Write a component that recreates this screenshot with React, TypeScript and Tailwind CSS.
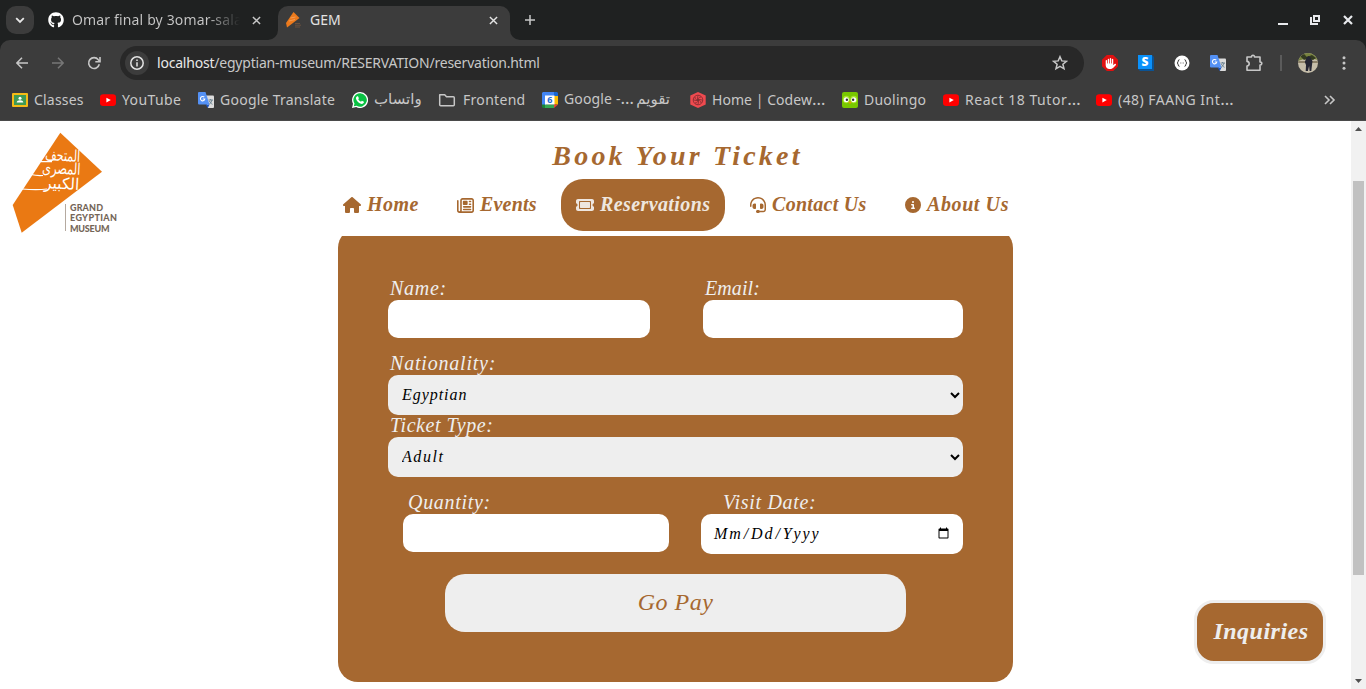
import React from 'react';
import { FaGithub, FaHouse, FaRegNewspaper, FaTicket, FaHeadset, FaCircleInfo, FaHand } from 'react-icons/fa6';

function Close({ className }: { className: string }) {
  return (
    <svg viewBox="0 0 10 10" className={className} fill="none" stroke="currentColor">
      <path d="M1 1l8 8M9 1L1 9" />
    </svg>
  );
}

function YouTubeIcon() {
  return (
    <svg viewBox="0 0 16 16" className="size-4 shrink-0">
      <rect y="2.3" width="16" height="11.6" rx="3.2" fill="#f00" />
      <path d="M6.4 5.7v4.8l4.4-2.4z" fill="#fff" />
    </svg>
  );
}

function TranslateIcon() {
  return (
    <svg viewBox="0 0 16 16" className="size-4 shrink-0">
      <path d="M6 3.5h9a1 1 0 0 1 1 1V15a1 1 0 0 1-1 1H10z" fill="#dcdcdc" />
      <path d="M10.500 8h4.500M12.600 7v1M14 8c-.5 2-1.500 3.500-3 4.500M11.500 9c.5 1.500 1.500 2.500 3 3.300" stroke="#607988" strokeWidth=".9" fill="none" />
      <path d="M7.500 12.600h4L9.800 16z" fill="#1a53c0" />
      <path d="M1 0h6.500l4 12.600H1a1 1 0 0 1-1-1V1a1 1 0 0 1 1-1z" fill="#5491f5" />
      <path d="M6.300 5.200A2.200 2.200 0 1 0 6.800 7H4.700" stroke="#fff" strokeWidth="1.100" fill="none" />
    </svg>
  );
}

function ClassesIcon() {
  return (
    <svg viewBox="0 0 16 16" className="size-4 shrink-0">
      <rect y="1" width="16" height="14" rx="1" fill="#f5bb16" />
      <rect x="2" y="3" width="12" height="10" fill="#3f9a55" />
      <circle cx="8" cy="6.2" r="1.5" fill="#fff" />
      <path d="M4.7 10.500c0-3 6.600-3 6.600 0z" fill="#fff" />
    </svg>
  );
}

function WhatsIcon() {
  return (
    <svg viewBox="0 0 16 16" className="size-4 shrink-0">
      <path d="M8 0a8 8 0 1 1-3.800 15L0 16l1-4.200A8 8 0 0 1 8 0z" fill="#fff" />
      <path d="M8 1.300a6.700 6.700 0 1 1-3.400 12.400l-2.800.6.700-2.700A6.700 6.700 0 0 1 8 1.300z" fill="#0ac143" />
      <path d="M5.200 4.300l.8-.1.900 2-.7 1q1 1.800 2.800 2.600l.9-1 2 1c.2 1.800-1.800 2.400-3 2C6.500 11 4.500 9 4 6.800c-.2-1 .4-2.100 1.200-2.500z" fill="#fff" />
    </svg>
  );
}

function FolderIcon() {
  return (
    <svg viewBox="0 0 18 16" className="h-4 w-[18px] shrink-0" fill="none" stroke="#c7c7c7" strokeWidth="1.500">
      <path d="M1.700 2.700h5l1.800 2h6.800q1 0 1 1v7q0 1-1 1H2.700q-1 0-1-1z" strokeLinejoin="round" />
    </svg>
  );
}

function CalendarIcon() {
  return (
    <svg viewBox="0 0 16 16" className="size-4 shrink-0">
      <path d="M1 0h11v4H4v9H0V1z" fill="#4285f4" />
      <path d="M12 0h3l1 1v3h-4z" fill="#1967d2" />
      <path d="M12 4h4v8.500h-4z" fill="#fbbc04" />
      <path d="M3 12.500h9V16H3z" fill="#34a853" />
      <path d="M0 12.500h3V16H1L0 15z" fill="#188038" />
      <path d="M12 12.500h4L12 16z" fill="#ea4335" />
      <path d="M3 3.500h9.500v9H3z" fill="#fff" />
      <text x="7.800" y="11.200" textAnchor="middle" className="fill-[#1967d2] font-['Noto_Sans',sans-serif] text-[9px] font-bold">6</text>
    </svg>
  );
}

function CodewarsIcon() {
  return (
    <svg viewBox="0 0 16 16" className="size-4 shrink-0">
      <path d="M8 0l7.700 3.500v9L8 16 .3 12.500v-9z" fill="#ef4a4f" />
      <g fill="none" stroke="#7b2a2f" strokeWidth=".8">
        <circle cx="8" cy="8" r="4.800" />
        <path d="M8 8c0-2 1-3 3-3M8 8c2 0 3 1 3 3M8 8c0 2-1 3-3 3M8 8c-2 0-3-1-3-3M8 8c1.500-1 3-.7 4.500.5M8 8c-1.500 1-3 .7-4.500-.5M8 8c-1-1.500-.7-3 .3-4.500M8 8c1 1.500.7 3-.3 4.500" />
      </g>
    </svg>
  );
}

function DuoIcon() {
  return (
    <svg viewBox="0 0 16 16" className="size-4 shrink-0">
      <rect width="16" height="16" rx="2" fill="#78c800" />
      <ellipse cx="4.300" cy="7.500" rx="3.500" ry="3.800" fill="#a8e52d" />
      <ellipse cx="11.700" cy="7.500" rx="3.500" ry="3.800" fill="#a8e52d" />
      <circle cx="4.300" cy="7.700" r="2.500" fill="#fff" />
      <circle cx="11.700" cy="7.700" r="2.500" fill="#fff" />
      <circle cx="4.900" cy="7.700" r="1.200" fill="#333" />
      <circle cx="11.100" cy="7.700" r="1.200" fill="#333" />
      <path d="M6.300 9.700h3.400L8 12z" fill="#f49000" />
    </svg>
  );
}

function Bookmark({ icon, width, children }: { icon: React.ReactNode; width: string; children: React.ReactNode }) {
  return (
    <div className={`flex shrink-0 items-center gap-1.5 whitespace-nowrap ${width}`}>
      {icon}
      <div className="flex gap-1.5 pb-0.5">{children}</div>
    </div>
  );
}

function TabStrip() {
  return (
    <div className="flex h-10 bg-[#1f2121] text-[#c7c7c7]">
      <div className="mt-1.5 ml-1.5 flex size-7 items-center justify-center rounded-[10px] bg-[#3c3c3c]">
        <svg viewBox="0 0 10 10" className="size-2.5" fill="none" stroke="#e8e8e8" strokeWidth="1.800">
          <path d="M1.200 3.200L5 7l3.800-3.800" />
        </svg>
      </div>
      <div className="flex w-[244px] items-center pl-3.5">
        <FaGithub className="size-4 shrink-0 text-white" />
        <span className="ml-2 w-[168px] bg-linear-to-r from-[#c7c7c7] from-80% to-transparent bg-clip-text pb-0.5 text-[14px] tracking-[0.150px] whitespace-nowrap text-transparent">Omar final by 3omar-sala</span>
        <Close className="ml-3 size-[9px] shrink-0 stroke-[1.600]" />
      </div>
      <div className="relative mt-1.5 flex h-[34px] w-[232px] items-center rounded-t-[10px] bg-[#3c3c3c] pb-1.5 text-[#e3e3e3]">
        <svg viewBox="0 0 10 10" className="absolute bottom-0 -left-2.5 size-2.5"><path d="M10 0v10H0A10 10 0 0 0 10 0z" fill="#3c3c3c" /></svg>
        <svg viewBox="0 0 10 10" className="absolute -right-2.5 bottom-0 size-2.5"><path d="M0 0v10h10A10 10 0 0 1 0 0z" fill="#3c3c3c" /></svg>
        <svg viewBox="0 0 16 16" className="ml-2 size-4">
          <path d="M7.500 0l6 6L1 15.500 0 11z" fill="#ec7a1c" />
          <path d="M4.500 6l5-1M3 9l6-1.500" stroke="#f6b27a" strokeWidth=".6" />
          <path d="M9 11.500h5M9 13.200h6M9 15h5" stroke="#755640" strokeWidth=".8" />
        </svg>
        <span className="ml-2 pb-px text-[14px]">GEM</span>
        <Close className="mr-3 ml-auto size-[9px] stroke-[1.600]" />
      </div>
      <svg viewBox="0 0 10 10" className="mt-[15px] ml-[15px] size-2.5" stroke="#c7c7c7" strokeWidth="1.500"><path d="M5 0v10M0 5h10" /></svg>
      <div className="mt-[15px] mr-[13px] ml-auto flex text-[#e8eaed]">
        <svg viewBox="0 0 10 10" className="mr-[22px] size-2.5"><path d="M0 8h10v2H0z" fill="currentColor" /></svg>
        <svg viewBox="0 0 10 10" className="mr-[23px] size-2.5" fill="none" stroke="currentColor" strokeWidth="2"><path d="M4 1h5v5H4zM1 2v7h7" /></svg>
        <Close className="size-2.5 stroke-[2.200]" />
      </div>
    </div>
  );
}

function Toolbar() {
  return (
    <div className="bg-[#1f2121]">
      <div className="flex h-10 items-center rounded-t-[10px] bg-[#3c3c3c] pt-1.5 text-[#c7c7c7]">
        <svg viewBox="0 0 12 12" className="ml-4 size-3" fill="none" stroke="#c7c7c7" strokeWidth="1.500"><path d="M12 6H1M6 .8L.9 6 6 11.200" /></svg>
        <svg viewBox="0 0 12 12" className="ml-6 size-3" fill="none" stroke="#777" strokeWidth="1.500"><path d="M0 6h11M6 .8L11.100 6 6 11.200" /></svg>
        <svg viewBox="0 0 14 14" className="ml-[23px] size-3.5" fill="none" stroke="#c7c7c7" strokeWidth="1.600"><path d="M12.300 8.300A5.400 5.400 0 1 1 11.300 3.700L12.800 5.500" /><path d="M13 1v4.800H8.300" /></svg>
        <div className="ml-[19px] flex h-[34px] w-[964px] items-center rounded-full bg-[#282828]">
          <div className="ml-[5px] flex size-6 items-center justify-center rounded-full bg-[#3c3c3c]">
            <svg viewBox="0 0 14 14" className="size-3.5" fill="none" stroke="#e3e3e3" strokeWidth="1.500"><circle cx="7" cy="7" r="6.200" /><path d="M7 6.200v4.300M7 3.500V5" /></svg>
          </div>
          <div className="ml-2 pb-0.5 text-[14px] tracking-[-0.210px] whitespace-nowrap"><span className="text-[#e8e8e8]">localhost</span>/egyptian-museum/RESERVATION/reservation.html</div>
          <svg viewBox="0 0 16 16" className="mr-4 ml-auto size-4" fill="none" stroke="#c7c7c7" strokeWidth="1.500"><path d="M8 1.700l1.800 4.200 4.600.4-3.500 3 1.100 4.500L8 11.400l-4 2.400 1.100-4.500-3.500-3 4.600-.4z" /></svg>
        </div>
        <div className="ml-[18px] flex size-4 items-center justify-center bg-[#e01010] text-white [clip-path:polygon(30%_0,70%_0,100%_30%,100%_70%,70%_100%,30%_100%,0_70%,0_30%)]"><FaHand className="size-[11px] -scale-x-100" /></div>
        <svg viewBox="0 0 16 16" className="ml-5 size-4 overflow-visible"><path d="M0 0h14l2 2v14H2l-2-2z" fill="#0b5394" /><path d="M0 0h14v14H0z" fill="#0a91fb" /><text x="7" y="11" textAnchor="middle" className="fill-white font-['Open_Sans',sans-serif] text-[12px] font-extrabold">S</text></svg>
        <svg viewBox="0 0 16 16" className="ml-5 size-4"><circle cx="8" cy="8" r="7.500" fill="#fff" /><path d="M5.500 4.700q-1.300 0-1.300 1.500T3 8q1.200.3 1.200 1.800t1.300 1.500M10.500 4.700q1.300 0 1.300 1.500T13 8q-1.200.3-1.200 1.800t-1.300 1.500" fill="none" stroke="#333" /><path d="M6 8h1m.5 0h1m.5 0h1" stroke="#777" strokeWidth=".8" /></svg>
        <div className="ml-5"><TranslateIcon /></div>
        <svg viewBox="0 0 18 18" className="ml-[19px] size-[18px]" fill="none" stroke="#c7c7c7" strokeWidth="1.600"><path d="M2 3h4.500q0-1.800 1.500-1.800T9.500 3H15v5q1.800 0 1.800 1.500T15 11v5.200H2V12q2.200-.3 2.200-2.300T2 7.400z" strokeLinejoin="round" /></svg>
        <div className="ml-[17px] h-4 w-0.5 bg-[#5b5b5b]" />
        <svg viewBox="0 0 20 20" className="ml-4 size-5 rounded-full"><path d="M0 0h20v20H0z" fill="#c5bda9" /><path d="M0 0h20v7l-4-1-5 2-5-2-6 2z" fill="#78833f" /><path d="M2 3l4-2 3 3 5-2 4 3-3 2-5-2-4 2z" fill="#333a20" /><path d="M0 8h20v2H0z" fill="#8b8068" /><path d="M8.500 4.500q2-3 4 0l2 3.500-.5 4-.7 6h-1.700l-.5-5-1.200 5H7.700l.3-6-1.200-3z" fill="#252633" /></svg>
        <svg viewBox="0 0 4 14" className="ml-6 h-3.5 w-1" fill="#c7c7c7"><circle cx="2" cy="1.700" r="1.500" /><circle cx="2" cy="7" r="1.500" /><circle cx="2" cy="12.300" r="1.500" /></svg>
      </div>
    </div>
  );
}

function Bookmarks() {
  return (
    <div className="flex h-[41px] items-center border-b border-[#4a4a4a] bg-[#3c3c3c] pl-3 text-[14px] text-[#c7c7c7]">
      <Bookmark icon={<ClassesIcon />} width="w-[88px]"><span className="tracking-[0.200px]">Classes</span></Bookmark>
      <Bookmark icon={<YouTubeIcon />} width="w-[98px]"><span className="tracking-[0.400px]">YouTube</span></Bookmark>
      <Bookmark icon={<TranslateIcon />} width="w-[154px]"><span className="tracking-[0.250px]">Google Translate</span></Bookmark>
      <Bookmark icon={<WhatsIcon />} width="w-[86px]"><span className="font-['DejaVu_Sans',sans-serif] text-[15px]">واتساب</span></Bookmark>
      <Bookmark icon={<FolderIcon />} width="w-[104px]"><span className="pl-px tracking-[0.300px]">Frontend</span></Bookmark>
      <Bookmark icon={<CalendarIcon />} width="w-[148px]"><span className="tracking-[0.150px]">Google -<span className="text-[17px] leading-[19px]">…</span></span><span className="-ml-1 font-['DejaVu_Sans',sans-serif] text-[15px]">تقويم</span></Bookmark>
      <Bookmark icon={<CodewarsIcon />} width="w-[152px]"><span className="tracking-[0.050px]">Home | Codew<span className="text-[17px] leading-[19px]">…</span></span></Bookmark>
      <Bookmark icon={<DuoIcon />} width="w-[101px]"><span className="tracking-[0.250px]">Duolingo</span></Bookmark>
      <Bookmark icon={<YouTubeIcon />} width="w-[153px]"><span className="tracking-[0.550px]">React 18 Tutor<span className="text-[17px] leading-[19px]">…</span></span></Bookmark>
      <Bookmark icon={<YouTubeIcon />} width="w-[228px]"><span className="tracking-[0.450px]">(48) FAANG Int<span className="text-[17px] leading-[19px]">…</span></span></Bookmark>
      <svg viewBox="0 0 12 10" className="h-2.5 w-3" fill="none" stroke="#c7c7c7" strokeWidth="1.600"><path d="M1 1l4 4-4 4M6 1l4 4-4 4" /></svg>
    </div>
  );
}

function Logo() {
  return (
    <svg viewBox="12 132 108 102" className="h-[102px] w-[108px] font-normal not-italic">
      <path d="M60.300 132.700L102 171.700 21.700 232.700 12.700 205z" fill="#ea7913" />
      <g fill="#fff" className="font-['DejaVu_Sans',sans-serif] text-[16px]">
        <text x="45" y="161" textLength="35" lengthAdjust="spacingAndGlyphs" transform="rotate(3 62 160)">المتحف</text>
        <text x="42" y="174" textLength="38" lengthAdjust="spacingAndGlyphs" transform="rotate(3 62 175)">المصرى</text>
        <text x="44" y="189" textLength="35" lengthAdjust="spacingAndGlyphs" transform="rotate(3 62 189)">الكبير</text>
      </g>
      <path d="M41 161.700h11M31 174.500q6 1.500 12 1M22 189q15 1.300 25 0" stroke="#fff" strokeWidth="1.200" fill="none" />
      <path d="M65.500 204v27" stroke="#b5aaa0" />
      <g fill="#756658" className="font-[Lato,sans-serif] text-[9px] font-black">
        <text x="70" y="210.700" textLength="33">GRAND</text>
        <text x="70" y="221.200" textLength="47">EGYPTIAN</text>
        <text x="70" y="231.700" textLength="39.500">MUSEUM</text>
      </g>
    </svg>
  );
}

function Header() {
  return (
    <header className="flex h-[115px] bg-white font-['Liberation_Serif',serif] font-bold text-[#a66830] italic">
      <div className="w-[338px] shrink-0 pt-[11px] pl-3"><Logo /></div>
      <div className="w-[675px]">
        <h1 className="flex h-[58px] items-center justify-center pt-3 pl-1 text-[28px] tracking-[3.200px]">Book Your Ticket</h1>
        <nav className="flex h-[52px] items-center text-[20px] whitespace-nowrap">
          <a className="flex w-[114px] items-center gap-1.5 pl-[5px]"><FaHouse className="size-[18px]" /><span className="pb-0.5 tracking-[0.500px]">Home</span></a>
          <a className="flex w-[109px] items-center gap-1.5 pl-[5px]"><FaRegNewspaper className="size-[17px]" /><span className="pb-0.5 tracking-[0.200px]">Events</span></a>
          <a className="flex h-[52px] w-[164px] items-center gap-1.5 rounded-[22px] bg-[#a66830] pl-[15px] text-[#eee6df]"><FaTicket className="size-[18px]" /><span className="pb-0.5 tracking-[0.400px]">Reservations</span></a>
          <a className="flex w-[155px] items-center gap-1.5 pl-[25px]"><FaHeadset className="size-4" /><span className="pb-0.5 tracking-[0.300px]">Contact Us</span></a>
          <a className="flex items-center gap-1.5 pl-[25px]"><FaCircleInfo className="size-4" /><span className="pb-0.5 tracking-[0.600px]">About Us</span></a>
        </nav>
      </div>
    </header>
  );
}

function Label({ className, children }: { className: string; children: React.ReactNode }) {
  return <span className={`h-[22px] leading-[20px] ${className}`}>{children}</span>;
}

function ReservationForm() {
  return (
    <div className="mx-auto w-[675px] overflow-hidden font-['Liberation_Serif',serif] text-[20px] text-[#eee] italic">
      <form className="-mt-2 h-[454px] rounded-[20px] bg-[#a66830] px-[50px] pt-[50px]">
        <div className="flex justify-between">
          <label className="flex w-[262px] flex-col"><Label className="pl-0.5 tracking-[0.700px]">Name:</Label><input className="h-[38px] rounded-[10px] bg-white" /></label>
          <label className="flex w-[260px] flex-col"><Label className="pl-0.5 tracking-[0.100px]">Email:</Label><input className="h-[38px] rounded-[10px] bg-white" /></label>
        </div>
        <label className="mt-[15px] flex flex-col"><Label className="pl-0.5 tracking-[0.800px]">Nationality:</Label>
          <select className="h-10 rounded-[10px] bg-[#eee] px-2.5 pb-0.5 text-[16px] tracking-[0.950px] text-black"><option>Egyptian</option></select>
        </label>
        <label className="flex flex-col"><Label className="pl-0.5 tracking-[0.550px]">Ticket Type:</Label>
          <select className="h-10 rounded-[10px] bg-[#eee] px-2.5 pb-0.5 text-[16px] tracking-[1.600px] text-black"><option>Adult</option></select>
        </label>
        <div className="mt-[15px] flex items-start justify-between pl-[15px]">
          <label className="flex w-[266px] flex-col"><Label className="pl-[5px] tracking-[0.700px]">Quantity:</Label><input className="h-[38px] rounded-[10px] bg-white" /></label>
          <label className="flex w-[262px] flex-col"><Label className="pl-[22px] tracking-[0.700px]">Visit Date:</Label><input type="date" className="h-10 rounded-[10px] bg-white pr-[11px] pl-3 text-[16px] tracking-[1.900px] text-black capitalize [&::-webkit-calendar-picker-indicator]:text-[13.330px]" /></label>
        </div>
        <button type="button" className="mx-auto mt-5 block h-[58px] w-[461px] rounded-[20px] bg-[#eee] pb-0.5 text-[24px] tracking-[0.500px] text-[#a66830] italic">Go Pay</button>
      </form>
    </div>
  );
}

export default function App() {
  return (
    <div className="flex h-[689px] w-[1366px] flex-col overflow-hidden bg-white font-['Noto_Sans',sans-serif]">
      <TabStrip />
      <Toolbar />
      <Bookmarks />
      <div className="relative flex min-h-0 flex-1">
        <main className="w-[1351px]">
          <Header />
          <ReservationForm />
        </main>
        <div className="flex w-[15px] flex-col items-center bg-[#f1f1f1]">
          <svg viewBox="0 0 7 4" className="mt-1.5 h-1 w-[7px]"><path d="M0 4l3.500-4L7 4z" fill="#505050" /></svg>
          <div className="mt-[50px] h-[394px] w-[11px] bg-[#c1c1c1]" />
          <svg viewBox="0 0 7 4" className="mt-auto mb-1.5 h-1 w-[7px]"><path d="M0 0h7L3.500 4z" fill="#505050" /></svg>
        </div>
        <button className="absolute right-10 bottom-[25px] h-16 w-[132px] rounded-[20px] border-3 border-[#eee] bg-[#a66830] pb-0.5 pl-0.5 font-['Liberation_Serif',serif] text-[24px] font-bold tracking-[0.500px] text-[#eee] italic">Inquiries</button>
      </div>
    </div>
  );
}
